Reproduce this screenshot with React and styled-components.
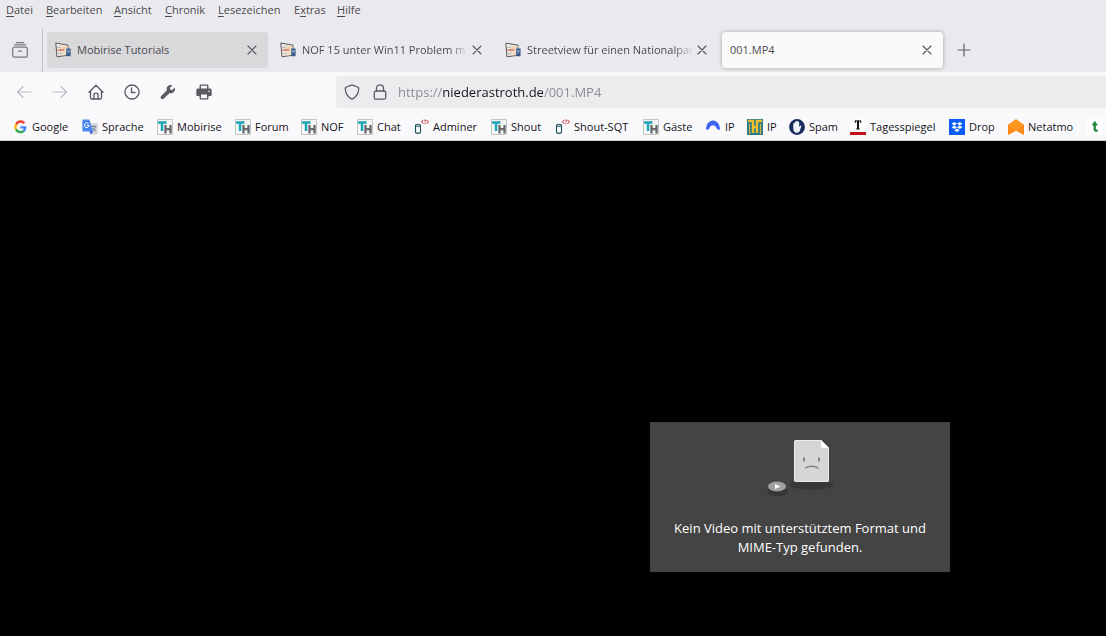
import React from 'react';
import styled, { createGlobalStyle } from 'styled-components';

const GlobalStyle = createGlobalStyle`
  *, *::before, *::after { box-sizing: border-box; }
  html, body { margin: 0; padding: 0; background: #000; }
  body, button, input {
    font-family: "Open Sans", "Noto Sans", sans-serif;
    font-size: 11px;
    line-height: 16px;
  }
  body { overflow: hidden; }
`;

const Browser = styled.div`
  display: flex;
  flex-direction: column;
  min-height: 100vh;
  background: #000;
`;

const PlainButton = styled.button`
  display: flex;
  align-items: center;
  padding: 0;
  border: 0;
  background: none;
  color: inherit;
  white-space: nowrap;
  text-align: left;
`;

const TitleArea = styled.header`
  display: flex;
  flex-direction: column;
  background: #eaeaee;
  color: #4a4a50;
`;

const MenuBar = styled.nav`
  display: flex;
  height: 28px;
  padding: 2px 6px 0;
`;

const MenuItem = styled(PlainButton)`
  flex: 0 0 ${(p) => p.$width}px;
  display: block;
  height: 16px;
`;

const AccessKey = styled.span`
  text-decoration: underline;
  text-underline-offset: 2px;
`;

const TabStrip = styled.div`
  display: flex;
  align-items: center;
  height: 44px;
`;

const RecentButton = styled(PlainButton)`
  justify-content: center;
  align-self: stretch;
  width: 43px;
  padding-right: 2px;
  border-right: 1px solid #c0c0c5;
  color: #77777e;
`;

const TabList = styled.div`
  display: flex;
  gap: 4px;
  padding-left: 4px;
`;

const Tab = styled.div`
  display: flex;
  align-items: center;
  width: 221px;
  height: 36px;
  padding: 0 8px;
  border-radius: 4px;
  background: ${(p) => (p.$state === 'active' ? '#fafafa' : p.$state === 'hover' ? '#d9d9dc' : 'transparent')};
  box-shadow: ${(p) => (p.$state === 'active' ? '0 0 4px rgba(0, 0, 0, 0.3)' : 'none')};
`;

const TabTitle = styled(PlainButton)`
  flex: 1;
  min-width: 0;
  gap: 6px;
  overflow: hidden;
  mask-image: ${(p) => (p.$faded ? 'linear-gradient(to left, transparent, #000 20px)' : 'none')};
`;

const CloseButton = styled(PlainButton)`
  flex: 0 0 16px;
  height: 16px;
  color: #55555c;
`;

const NewTabButton = styled(PlainButton)`
  justify-content: center;
  width: 32px;
  height: 32px;
  margin-left: 5px;
  color: #606068;
`;

const NavBar = styled.div`
  display: flex;
  align-items: flex-start;
  height: 41px;
  padding: 4px 0 0 6px;
  background: #f9f9fb;
  color: #5b5b64;
`;

const ToolButton = styled(PlainButton)`
  flex: 0 0 36px;
  justify-content: center;
  height: 32px;
  &:disabled { color: #bcbcc2; }
`;

const AddressBar = styled.div`
  display: flex;
  align-items: center;
  flex: 1;
  gap: 12px;
  height: 32px;
  margin-left: 114px;
  padding-left: 8px;
  border-radius: 4px 0 0 4px;
  background: #ececee;
`;

const AddressInput = styled.input`
  flex: 1;
  min-width: 0;
  height: 24px;
  margin: 0 0 0 -2px;
  padding: 0;
  border: 0;
  outline: 0;
  font-size: 13px;
  color: transparent;
  background: linear-gradient(90deg, #88888e 45px, #15141a 45px, #15141a 145px, #88888e 145px);
  background-clip: text;
`;

const BookmarkBar = styled.nav`
  display: flex;
  height: 28px;
  padding-left: 12px;
  overflow: hidden;
  border-bottom: 1px solid #d0d0d4;
  background: #f9f9fb;
`;

const Bookmark = styled.a`
  display: flex;
  align-items: center;
  flex: 0 0 ${(p) => p.$width}px;
  gap: 4px;
  color: #15141a;
  text-decoration: none;
  white-space: nowrap;
`;

const Icon = styled.svg`
  flex: none;
  display: block;
`;

const Player = styled.main`
  flex: 1;
  display: flex;
  justify-content: flex-end;
  align-items: flex-start;
  padding: 281px 156px 64px 0;
  background: #000;
`;

const ErrorPanel = styled.section`
  display: flex;
  flex-direction: column;
  align-items: center;
  gap: 19px;
  width: 300px;
  height: 150px;
  padding-top: 16px;
  background: #444;
`;

const ErrorText = styled.p`
  margin: 0;
  width: 272px;
  font-size: 13px;
  line-height: 19px;
  text-align: center;
  color: #fff;
`;

const Line = ({ children, size = 16, width = 1.2 }) => (
  <Icon width={size} height={size} viewBox="0 0 16 16" fill="none" stroke="currentColor" strokeWidth={width} strokeLinecap="round" strokeLinejoin="round" aria-hidden="true">
    {children}
  </Icon>
);

const Picture = ({ children }) => (
  <Icon width="16" height="16" viewBox="0 0 16 16" aria-hidden="true">{children}</Icon>
);

const PageIcon = () => (
  <Picture>
    <path d="M.8 1 13 3.200v10L2 14.800z" fill="#efebe4" stroke="#55585a" strokeWidth="1" />
    <path d="M2.500 5.500h3M3 11.500h3" stroke="#a5a5a5" strokeWidth=".8" />
    <path d="M5.800 3v10.500" stroke="#cfc6b4" strokeWidth="1" />
    <path d="M7 4.200h5.500V7H7z" fill="#f2d2b0" />
    <path d="M2.500 8h7" stroke="#d46545" strokeWidth="1.300" />
    <path d="M7 9.400h4v3.800H7z" fill="#f3dcc4" />
    <path d="M11.200 6.600h4.400v7.600h-4.400z" fill="#3e5a88" />
    <path d="M12.200 8h2.400v2.800h-2.400z" fill="#7aa0c8" />
  </Picture>
);

const ThIcon = () => (
  <Picture>
    <path d="M0 0h16v16H0z" fill="#f6f6f6" />
    <path d="M.5 15.500V.5h15v15z" fill="none" stroke="#c4c4c4" />
    <path d="M1 3.500h8.500M5 3.500V12" stroke="#20a5b2" strokeWidth="2.500" />
    <path d="M8.500 6v8.500M13.500 6v8.500M8.500 10.200h5" stroke="#666a6c" strokeWidth="2.300" fill="none" />
  </Picture>
);

const AdminerIcon = () => (
  <Picture>
    <path d="M2.500 6.500c0-1.600 5-1.600 5 0v6.500c0 1.800-5 1.800-5 0z" fill="#f6fbfb" stroke="#174e58" strokeWidth="1.100" />
    <path d="M2.800 6.800c1 .8 3.400.8 4.400 0" stroke="#174e58" fill="none" />
    <path d="M10.300.8 8.300 2.800l2 2M11.300 1.200c1.200-.7 2 .6.6 1.600v.4M11.900 4.300v.8M13.500.8l2 2-2 2" fill="none" stroke="#c51c2c" strokeWidth="1" />
  </Picture>
);

const GoogleIcon = () => (
  <Picture>
    <g fill="none" strokeWidth="2.400">
      <path d="M12.400 4.200A5 5 0 0 0 4 5.600" stroke="#ea4335" />
      <path d="M4 5.600a5 5 0 0 0 0 4.800" stroke="#fbbc05" />
      <path d="M4 10.400a5 5 0 0 0 7.600 1.600" stroke="#34a853" />
      <path d="M11.600 12a5 5 0 0 0 1.600-3.600H8.400" stroke="#4285f4" />
    </g>
  </Picture>
);

const TranslateIcon = () => (
  <Picture>
    <path d="M6 4h8.600c.8 0 1.200.4 1.200 1.200V14c0 .8-.4 1.400-1.200 1.400H9z" fill="#d5d7da" />
    <path d="M9.500 7.500h5M12 6.300v1.200M13.600 7.600c-.6 2-1.800 3.600-3.400 4.400M10.600 8.800c.8 1.400 1.800 2.400 3.400 3.200" fill="none" stroke="#6d7f8c" strokeWidth=".9" />
    <path d="M1.500.4h5.800l4 12H1.500C.7 12.400.4 12 .4 11.200V1.500C.4.8.8.4 1.500.4z" fill="#4a87ee" />
    <path d="M7.400 12.400h3.800l-2.400 3z" fill="#3059c4" />
    <path d="M6.500 4.700a2.300 2.300 0 1 0 .6 1.800H5" fill="none" stroke="#fff" strokeWidth="1" />
  </Picture>
);

const ArchIcon = () => (
  <Picture>
    <path d="M1 10.500C1.200 5 4 1.500 8 1.500s6.800 3.500 7 9c-1.800.6-3.200-.4-3.800-2C10.600 7 9.600 6.200 8 6.200S5.400 7 4.800 8.500c-.6 1.600-2 2.600-3.800 2z" fill="#3e62f0" />
  </Picture>
);

const GoldThIcon = () => (
  <Picture>
    <path d="M0 0h16v16H0z" fill="#2a7a8c" />
    <path d="M1 2h5v12M15 2h-5v12M6 8h4" fill="none" stroke="#ecbd2c" strokeWidth="2.400" />
    <path d="M2.500 5v10M13.500 5v10" fill="none" stroke="#d5b23a" strokeWidth="1.200" />
  </Picture>
);

const HandIcon = () => (
  <Picture>
    <circle cx="8" cy="8" r="7.900" fill="#182a5c" />
    <path d="M4.300 8V4.600c0-.9 1.300-.9 1.400 0V3.200c0-1 1.500-1 1.500 0v-.6c0-1 1.500-1 1.500 0v.6c0-1 1.500-1 1.500 0V8l1-1.300c.7-.6 1.500-.1 1.100.6L10.800 12c-1.100 2.400-5 2.400-5.900 0-.5-1-.6-2.400-.6-4z" fill="#f1f4fa" />
  </Picture>
);

const TagesspiegelIcon = () => (
  <Picture>
    <path d="M0 0h16v16H0z" fill="#fff" />
    <path d="M0 13h16v3H0z" fill="#c4101c" />
    <path d="M5 2h6M5.300 1.500V4M10.700 1.500V4M6.200 10h3.600" stroke="#151515" strokeWidth="1" />
    <path d="M8 1.500V10" stroke="#151515" strokeWidth="2" />
  </Picture>
);

const DropboxIcon = () => (
  <Picture>
    <path d="M0 0h16v16H0z" fill="#0b5df5" />
    <path d="m5.300 3 2.700 1.700-2.700 1.700-2.700-1.700zM10.700 3l2.700 1.700-2.700 1.700L8 4.700zM5.300 6.600 8 8.300 5.300 10 2.600 8.300zM10.700 6.600l2.700 1.700-2.700 1.700L8 8.300zM8 9.600l2.600 1.700L8 13l-2.600-1.700z" fill="#fff" />
  </Picture>
);

const NetatmoIcon = () => (
  <Picture>
    <path d="M8 0 16 5.800V16l-8-4.600L0 16V5.800z" fill="#ff961f" />
    <path d="M0 5.800 8 11.400 0 16z" fill="#ff8a18" />
    <path d="m8 11.400 8-5.600V16z" fill="#f98a1c" />
  </Picture>
);

const GreenTIcon = () => (
  <Picture>
    <path d="M0 0h16v16H0z" fill="#fff" />
    <path d="M7.700 2.500v7.400c0 1.600 1 2 2.900 1.500M5.300 5.500h5" fill="none" stroke="#158434" strokeWidth="2.200" />
  </Picture>
);

const CloseIcon = () => <Line width={1.1}><path d="m4 4 8 8M12 4l-8 8" /></Line>;

const BrokenFileArt = () => (
  <Icon width="70" height="62" viewBox="0 0 70 62" aria-hidden="true">
    <ellipse cx="46.500" cy="47" rx="22" ry="5" fill="#373737" />
    <ellipse cx="12.500" cy="53.500" rx="10.500" ry="4.500" fill="#373737" />
    <path d="M31 2h25l8 8v32a2 2 0 0 1-2 2H31a2 2 0 0 1-2-2V4a2 2 0 0 1 2-2z" fill="#d6d6d6" />
    <path d="M29.500 43V4a1.500 1.500 0 0 1 1.500-1.500h25M63.500 10v32a1.500 1.500 0 0 1-1.500 1.500H31" fill="none" stroke="#ececec" />
    <path d="M56 2v6a2 2 0 0 0 2 2h6z" fill="#fff" />
    <path d="M39 19.500v4M54 19.500v4" stroke="#858585" strokeWidth="2" />
    <path d="M40 30.500c3-3 10-3 13.500 0" fill="none" stroke="#858585" strokeWidth="1.300" />
    <ellipse cx="12" cy="48.500" rx="9" ry="5" fill="#a0a0a0" />
    <path d="m10 46 5.500 2.500L10 51z" fill="#fff" />
  </Icon>
);

const menus = [
  ['', 'D', 'atei', 40],
  ['', 'B', 'earbeiten', 68],
  ['', 'A', 'nsicht', 51],
  ['', 'C', 'hronik', 53],
  ['', 'L', 'esezeichen', 76],
  ['E', 'x', 'tras', 43],
  ['', 'H', 'ilfe', 40],
];

const tabs = [
  { title: 'Mobirise Tutorials', icon: true, state: 'hover' },
  { title: 'NOF 15 unter Win11 Problem m', icon: true, faded: true },
  { title: 'Streetview für einen Nationalpar', icon: true, faded: true },
  { title: '001.MP4', state: 'active' },
];

const bookmarks = [
  ['Google', GoogleIcon, 70],
  ['Sprache', TranslateIcon, 75],
  ['Mobirise', ThIcon, 78],
  ['Forum', ThIcon, 66],
  ['NOF', ThIcon, 56],
  ['Chat', ThIcon, 56],
  ['Adminer', AdminerIcon, 78],
  ['Shout', ThIcon, 63],
  ['Shout-SQT', AdminerIcon, 89],
  ['Gäste', ThIcon, 62],
  ['IP', ArchIcon, 42],
  ['IP', GoldThIcon, 42],
  ['Spam', HandIcon, 61],
  ['Tagesspiegel', TagesspiegelIcon, 99],
  ['Drop', DropboxIcon, 59],
  ['Netatmo', NetatmoIcon, 79],
  ['', GreenTIcon, 16],
];

export default function App() {
  return (
    <Browser>
      <GlobalStyle />
      <TitleArea>
        <MenuBar aria-label="Menü">
          {menus.map(([before, key, after, width]) => (
            <MenuItem key={after} type="button" $width={width}>
              {before}<AccessKey>{key}</AccessKey>{after}
            </MenuItem>
          ))}
        </MenuBar>
        <TabStrip>
          <RecentButton type="button" aria-label="Zuletzt angesehen">
            <Line>
              <rect x=".7" y="5.200" width="14.600" height="10" rx="2" />
              <path d="M2.300 2.800h11.400M4.300.6h7.400M6.500 9.200h3" />
            </Line>
          </RecentButton>
          <TabList role="tablist">
            {tabs.map((tab) => (
              <Tab key={tab.title} $state={tab.state}>
                <TabTitle type="button" role="tab" aria-selected={tab.state === 'active'} $faded={tab.faded}>
                  {tab.icon && <PageIcon />}
                  {tab.title}
                </TabTitle>
                <CloseButton type="button" aria-label="Tab schließen"><CloseIcon /></CloseButton>
              </Tab>
            ))}
          </TabList>
          <NewTabButton type="button" aria-label="Neuer Tab">
            <Line><path d="M8 2v12M2 8h12" /></Line>
          </NewTabButton>
        </TabStrip>
      </TitleArea>

      <NavBar>
        <ToolButton type="button" disabled aria-label="Zurück">
          <Line><path d="M15 8H1.500M7 2.500 1.500 8 7 13.500" /></Line>
        </ToolButton>
        <ToolButton type="button" disabled aria-label="Vor">
          <Line><path d="M1 8h13.500M9 2.500 14.500 8 9 13.500" /></Line>
        </ToolButton>
        <ToolButton type="button" aria-label="Startseite">
          <Line width={1.3}>
            <path d="M1 8.200 8 1.200l7 7M2.500 7v6.800c0 .8.500 1.200 1.200 1.200h8.600c.7 0 1.200-.4 1.200-1.200V7" />
            <path d="M6 15v-4c0-2.400 4-2.400 4 0v4" />
          </Line>
        </ToolButton>
        <ToolButton type="button" aria-label="Chronik">
          <Line width={1.3}><circle cx="8" cy="8" r="7" /><path d="M7.500 4v4.500H11" /></Line>
        </ToolButton>
        <ToolButton type="button" aria-label="Werkzeuge">
          <Picture>
            <path d="M14.700 3.600 12.300 6 10.300 5.700 10 3.700l2.400-2.400C10.800.6 9 .8 7.800 2c-1.200 1.200-1.400 2.800-.9 4.200L1.200 12c-.8.800-.8 1.900-.1 2.600.8.800 2 .8 2.700 0l5.900-5.700c1.400.5 3 .2 4.200-1C15 6.800 15.300 5.100 14.700 3.600z" fill="currentColor" />
          </Picture>
        </ToolButton>
        <ToolButton type="button" aria-label="Drucken">
          <Picture>
            <path d="M3.500 4.500V2.200C3.500 1 4.200.5 5 .5h6c.8 0 1.500.5 1.500 1.700v2.300H14c1 0 1.700.7 1.700 1.700v4.600c0 .8-.6 1.200-1.400 1.200h-1.800v2c0 1-.6 1.500-1.500 1.500H5c-.9 0-1.500-.5-1.500-1.500v-2H1.700c-.8 0-1.400-.4-1.400-1.200V6.200c0-1 .7-1.700 1.700-1.700z" fill="currentColor" />
            <path d="M5 1.800h6v2.700H5zM5 10.500h6v3.700H5z" fill="#f9f9fb" />
            <circle cx="13" cy="7.200" r=".8" fill="#f9f9fb" />
          </Picture>
        </ToolButton>
        <AddressBar>
          <Line width={1.3}><path d="M8 .8 14.700 3.500c.3 5.200-1.800 9.200-6.700 11.700C3.100 12.700 1 8.700 1.300 3.500z" /></Line>
          <Line width={1.3}>
            <rect x="2.300" y="7" width="11.400" height="8.200" rx="1.500" />
            <path d="M4.500 7V4.300c0-4.600 7-4.600 7 0V7" />
          </Line>
          <AddressInput aria-label="Adresse" defaultValue="https://niederastroth.de/001.MP4" />
        </AddressBar>
      </NavBar>

      <BookmarkBar aria-label="Lesezeichen">
        {bookmarks.map(([label, Favicon, width], i) => (
          <Bookmark key={i} href="#" $width={width}>
            <Favicon />
            {label}
          </Bookmark>
        ))}
      </BookmarkBar>

      <Player>
        <ErrorPanel role="alert">
          <BrokenFileArt />
          <ErrorText>Kein Video mit unterstütztem Format und MIME-Typ gefunden.</ErrorText>
        </ErrorPanel>
      </Player>
    </Browser>
  );
}
